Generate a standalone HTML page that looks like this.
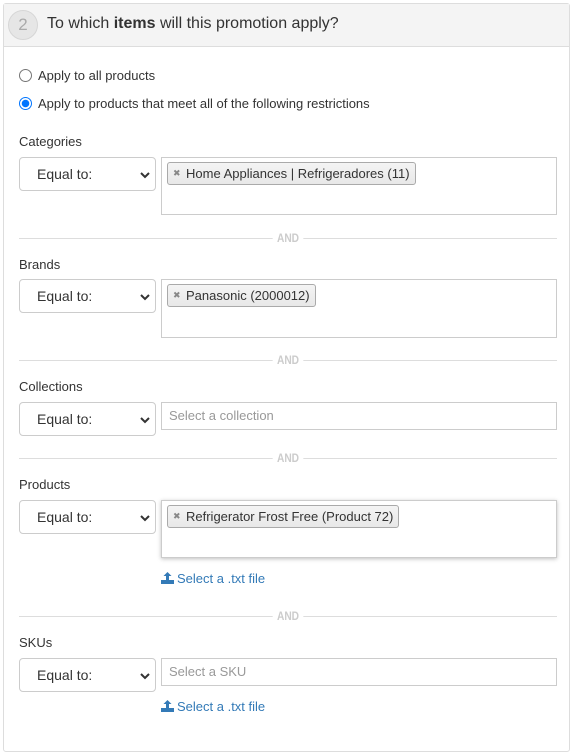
<!DOCTYPE html>
<html><head><meta charset="utf-8"><style>
*{box-sizing:border-box;margin:0;padding:0}
body{width:573px;height:754px;background:#fff;font-family:"Liberation Sans",Arial,sans-serif;color:#333;position:relative;overflow:hidden}
.a{position:absolute}
.panel{left:3px;top:3px;width:567px;height:749px;border:1px solid #ddd;border-radius:3px}
.head{left:4px;top:4px;width:565px;height:43px;background:#f4f4f4;border-bottom:1px solid #ddd}
.circ{left:8px;top:10px;width:30px;height:30px;border-radius:50%;background:#e6e6e6;border:1px solid #d6d6d6;color:#aaa;font-size:17px;text-align:center;line-height:28px}
.title{left:47px;top:15px;font-size:16px;color:#333}
.radio{width:13px;height:13px;border-radius:50%;border:1px solid #767676;background:#fff}
.radio.on{border:1px solid #0075ff;background:radial-gradient(circle,#0075ff 0 3.5px,#fff 4px)}
.t13{font-size:13px}
.lbl{font-size:13px;left:19px}
.sel{left:19px;width:137px;height:34px;border:1px solid #ccc;border-radius:4px;background:#fff;font-size:14px;padding-left:17px;line-height:32px}
.sel svg{position:absolute;right:5px;top:13px}
.box{left:161px;width:396px;border:1px solid #ccc;background:#fff}
.tag{left:167px;height:23px;border:1px solid #aaa;border-radius:3px;background:linear-gradient(#f4f4f4,#e8e8e8);font-size:13px;padding-left:18px;line-height:21px;color:#333}
.tag:before{content:"✖";position:absolute;left:5px;top:0;font-size:9px;color:#888}
.ph{font-size:13px;color:#999;padding-left:7px;line-height:25px}
.hr{left:19px;width:538px;height:1px;background:#ddd}
.and{left:270px;width:36px;background:#fff;text-align:center;font-size:12px;font-weight:bold;color:#ccc;transform:scaleX(.85)}
.link{left:161px;font-size:13px;color:#337ab7}
</style></head><body>
<div class="a panel"></div>
<div class="a head"></div>
<div class="a circ">2</div>
<div class="a title">To which <b>items</b> will this promotion apply?</div>

<div class="a radio" style="left:19px;top:69px"></div>
<div class="a t13" style="left:38px;top:68px">Apply to all products</div>
<div class="a radio on" style="left:19px;top:97px"></div>
<div class="a t13" style="left:38px;top:96px">Apply to products that meet all of the following restrictions</div>

<div class="a lbl" style="top:134px">Categories</div>
<div class="a sel" style="top:157px">Equal to:<svg width="10" height="8" viewBox="0 0 10 8"><path d="M1 2l4 4 4-4" stroke="#333" stroke-width="2" fill="none"/></svg></div>
<div class="a box" style="top:157px;height:58px"></div>
<div class="a tag" style="top:162px;width:249px">Home Appliances | Refrigeradores (11)</div>
<div class="a hr" style="top:238px"></div><div class="a and" style="top:231px">AND</div>

<div class="a lbl" style="top:257px">Brands</div>
<div class="a sel" style="top:279px">Equal to:<svg width="10" height="8" viewBox="0 0 10 8"><path d="M1 2l4 4 4-4" stroke="#333" stroke-width="2" fill="none"/></svg></div>
<div class="a box" style="top:279px;height:59px"></div>
<div class="a tag" style="top:284px;width:149px">Panasonic (2000012)</div>
<div class="a hr" style="top:360px"></div><div class="a and" style="top:353px">AND</div>

<div class="a lbl" style="top:379px">Collections</div>
<div class="a sel" style="top:402px">Equal to:<svg width="10" height="8" viewBox="0 0 10 8"><path d="M1 2l4 4 4-4" stroke="#333" stroke-width="2" fill="none"/></svg></div>
<div class="a box ph" style="top:402px;height:28px">Select a collection</div>
<div class="a hr" style="top:458px"></div><div class="a and" style="top:451px">AND</div>

<div class="a lbl" style="top:477px">Products</div>
<div class="a sel" style="top:500px">Equal to:<svg width="10" height="8" viewBox="0 0 10 8"><path d="M1 2l4 4 4-4" stroke="#333" stroke-width="2" fill="none"/></svg></div>
<div class="a box" style="top:500px;height:58px;box-shadow:0 1px 4px rgba(0,0,0,.25)"></div>
<div class="a tag" style="top:505px;width:232px">Refrigerator Frost Free (Product 72)</div>
<div class="a link" style="top:571px"><svg width="13" height="12" viewBox="0 0 13 12" style="vertical-align:-1px;margin-right:3px"><path d="M6.5 0L2.5 4h2.5v4h3V4h2.5z" fill="#337ab7"/><rect x="0" y="8" width="13" height="4" fill="#337ab7"/></svg>Select a .txt file</div>
<div class="a hr" style="top:616px"></div><div class="a and" style="top:609px">AND</div>

<div class="a lbl" style="top:635px">SKUs</div>
<div class="a sel" style="top:658px">Equal to:<svg width="10" height="8" viewBox="0 0 10 8"><path d="M1 2l4 4 4-4" stroke="#333" stroke-width="2" fill="none"/></svg></div>
<div class="a box ph" style="top:658px;height:28px">Select a SKU</div>
<div class="a link" style="top:699px"><svg width="13" height="12" viewBox="0 0 13 12" style="vertical-align:-1px;margin-right:3px"><path d="M6.5 0L2.5 4h2.5v4h3V4h2.5z" fill="#337ab7"/><rect x="0" y="8" width="13" height="4" fill="#337ab7"/></svg>Select a .txt file</div>
</body></html>
